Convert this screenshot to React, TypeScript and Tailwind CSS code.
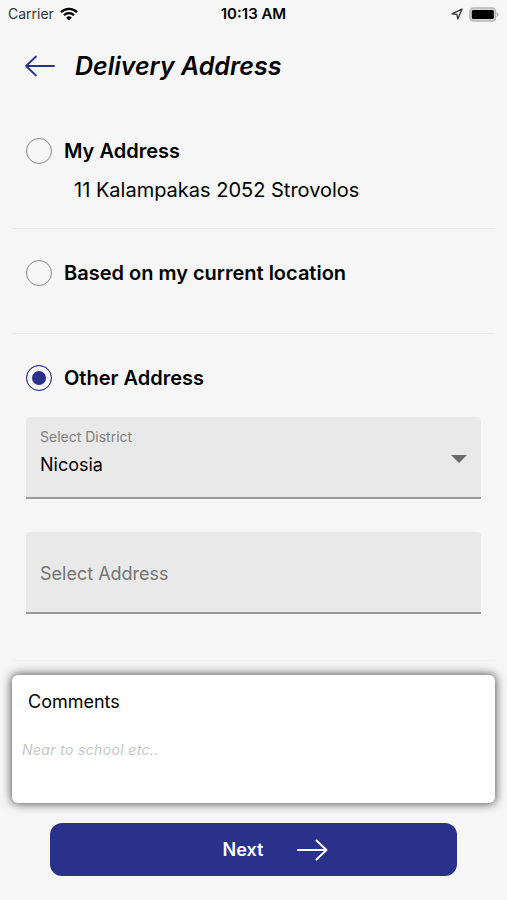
import { useState } from 'react';

type AddressType = 'mine' | 'current' | 'other';

const districts = ['Nicosia', 'Limassol', 'Larnaca', 'Paphos', 'Famagusta'];

function WifiIcon() {
  return (
    <svg viewBox="0 0 18 14" className="w-[18px] h-[14px]" fill="none" stroke="black" strokeWidth="2.3" aria-hidden="true">
      <path d="M1 5.1a11.4 11.4 0 0 1 16 0" />
      <path d="M4 8.2a7.1 7.1 0 0 1 10 0" />
      <path d="M9 13.6 6.1 10.7a4.1 4.1 0 0 1 5.8 0Z" fill="black" stroke="none" />
    </svg>
  );
}

function LocationIcon() {
  return (
    <svg viewBox="0 0 12 12" className="w-3 h-3" fill="none" stroke="#333" strokeWidth="1.3" strokeLinejoin="round" aria-hidden="true">
      <path d="M11 1.2 1 5.8l4.900.5.9 4.700Z" />
    </svg>
  );
}

function BatteryIcon() {
  return (
    <svg viewBox="0 0 30 15" className="w-[30px] h-[15px]" aria-hidden="true">
      <rect x="1" y="1" width="25.500" height="13" rx="3.5" fill="#d8d8d8" stroke="#b8b8b8" strokeWidth="1.600" />
      <rect x="2.800" y="3" width="22" height="9" rx="1.500" fill="black" />
      <path d="M27.800 5.200c2.200.8 2.200 3.800 0 4.600Z" fill="#b5b5b5" />
    </svg>
  );
}

function StatusBar() {
  return (
    <div className="grid grid-cols-3 items-center h-7 px-2 text-sm text-black">
      <div className="flex items-center gap-[6px] text-[#333]">
        Carrier
        <WifiIcon />
      </div>
      <div className="text-center text-[15px] font-semibold">10:13 AM</div>
      <div className="flex items-center justify-end gap-[6px]">
        <LocationIcon />
        <BatteryIcon />
      </div>
    </div>
  );
}

type OptionProps = {
  value: AddressType;
  label: string;
  selected: AddressType;
  onSelect: (value: AddressType) => void;
};

function AddressOption({ value, label, selected, onSelect }: OptionProps) {
  return (
    <label className="flex items-center gap-3 h-8 text-xl font-semibold">
      <input
        type="radio"
        name="address-type"
        value={value}
        checked={selected === value}
        onChange={() => onSelect(value)}
        className="appearance-none w-[26px] h-[26px] shrink-0 rounded-full border border-[#888888] checked:border-[#2a318b] checked:bg-[#2a318b] checked:shadow-[inset_0_0_0_5px_#f6f6f6]"
      />
      {label}
    </label>
  );
}

export default function App() {
  const [addressType, setAddressType] = useState<AddressType>('other');
  const [district, setDistrict] = useState('Nicosia');
  const [address, setAddress] = useState('');
  const [comments, setComments] = useState('');

  return (
    <div className="min-h-screen bg-[#f6f6f6] text-black font-['Inter','Liberation_Sans',sans-serif]">
      <StatusBar />

      {/* Header */}
      <header className="flex items-center gap-5 px-6 pt-4">
        <button type="button" aria-label="Back">
          <svg viewBox="0 0 31 22" className="w-[31px] h-[22px]" fill="none" stroke="#2a318b" strokeWidth="1.8" strokeLinecap="round" strokeLinejoin="round">
            <path d="M30 11H2M12 1.5 2 11l10 9.5" />
          </svg>
        </button>
        <h1 className="text-[25px] leading-[44px] font-semibold italic">Delivery Address</h1>
      </header>

      <form onSubmit={(e) => e.preventDefault()} className="px-3">
        <section className="pt-[47px] pb-6 px-[14px]">
          <AddressOption value="mine" label="My Address" selected={addressType} onSelect={setAddressType} />
          <p className="pt-[9px] pl-12 text-xl">11 Kalampakas 2052 Strovolos</p>
        </section>
        <hr className="border-[#e9e9e9]" />

        <section className="pt-7 pb-11 px-[14px]">
          <AddressOption value="current" label="Based on my current location" selected={addressType} onSelect={setAddressType} />
        </section>
        <hr className="border-[#e9e9e9]" />

        <section className="pt-7 pb-[46px] px-[14px]">
          <AddressOption value="other" label="Other Address" selected={addressType} onSelect={setAddressType} />

          <div className="flex items-center mt-[23px] h-[82px] px-[14px] rounded-t bg-[#e9e9e9] border-b-2 border-[#999999]">
            <div className="flex flex-col flex-1 pb-1">
              <label htmlFor="district" className="text-sm text-[#808080]">Select District</label>
              <select
                id="district"
                value={district}
                onChange={(e) => setDistrict(e.target.value)}
                className="appearance-none h-9 text-lg outline-none"
              >
                {districts.map((name) => (
                  <option key={name}>{name}</option>
                ))}
              </select>
            </div>
            <svg viewBox="0 0 16 8" className="w-4 h-2 mt-1" fill="#6b6b6b" aria-hidden="true">
              <path d="M0 0h16L8 8Z" />
            </svg>
          </div>

          <input
            type="text"
            aria-label="Select Address"
            placeholder="Select Address"
            value={address}
            onChange={(e) => setAddress(e.target.value)}
            className="block w-full mt-[33px] h-[82px] px-[14px] pt-[2px] rounded-t bg-[#e9e9e9] border-b-2 border-[#999999] text-lg placeholder:text-[#757575] outline-none"
          />
        </section>
        <hr className="border-[#f0f0f0]" />

        {/* Comments */}
        <div className="mt-[14px] h-32 rounded-md bg-white px-[10px] pt-[15px] shadow-[0_0_10px_1px_rgba(0,0,0,0.65)]">
          <label htmlFor="comments" className="block pl-[6px] text-lg leading-6">Comments</label>
          <textarea
            id="comments"
            rows={2}
            placeholder="Near to school etc.."
            value={comments}
            onChange={(e) => setComments(e.target.value)}
            className="block w-full mt-[26px] text-sm tracking-wide resize-none outline-none placeholder:italic placeholder:text-[#c6c6c6]"
          />
        </div>

        <div className="px-[38px] pt-5 pb-6">
          <button type="submit" className="flex items-center justify-center w-full h-[53px] pl-11 gap-[34px] rounded-xl bg-[#2a318b] text-white text-lg font-semibold">
            Next
            <svg viewBox="0 0 31 22" className="w-[31px] h-[22px]" fill="none" stroke="white" strokeWidth="2" strokeLinecap="round" strokeLinejoin="round" aria-hidden="true">
              <path d="M1 11h28M19.5 1.5 29.5 11l-10 9.5" />
            </svg>
          </button>
        </div>
      </form>
    </div>
  );
}
